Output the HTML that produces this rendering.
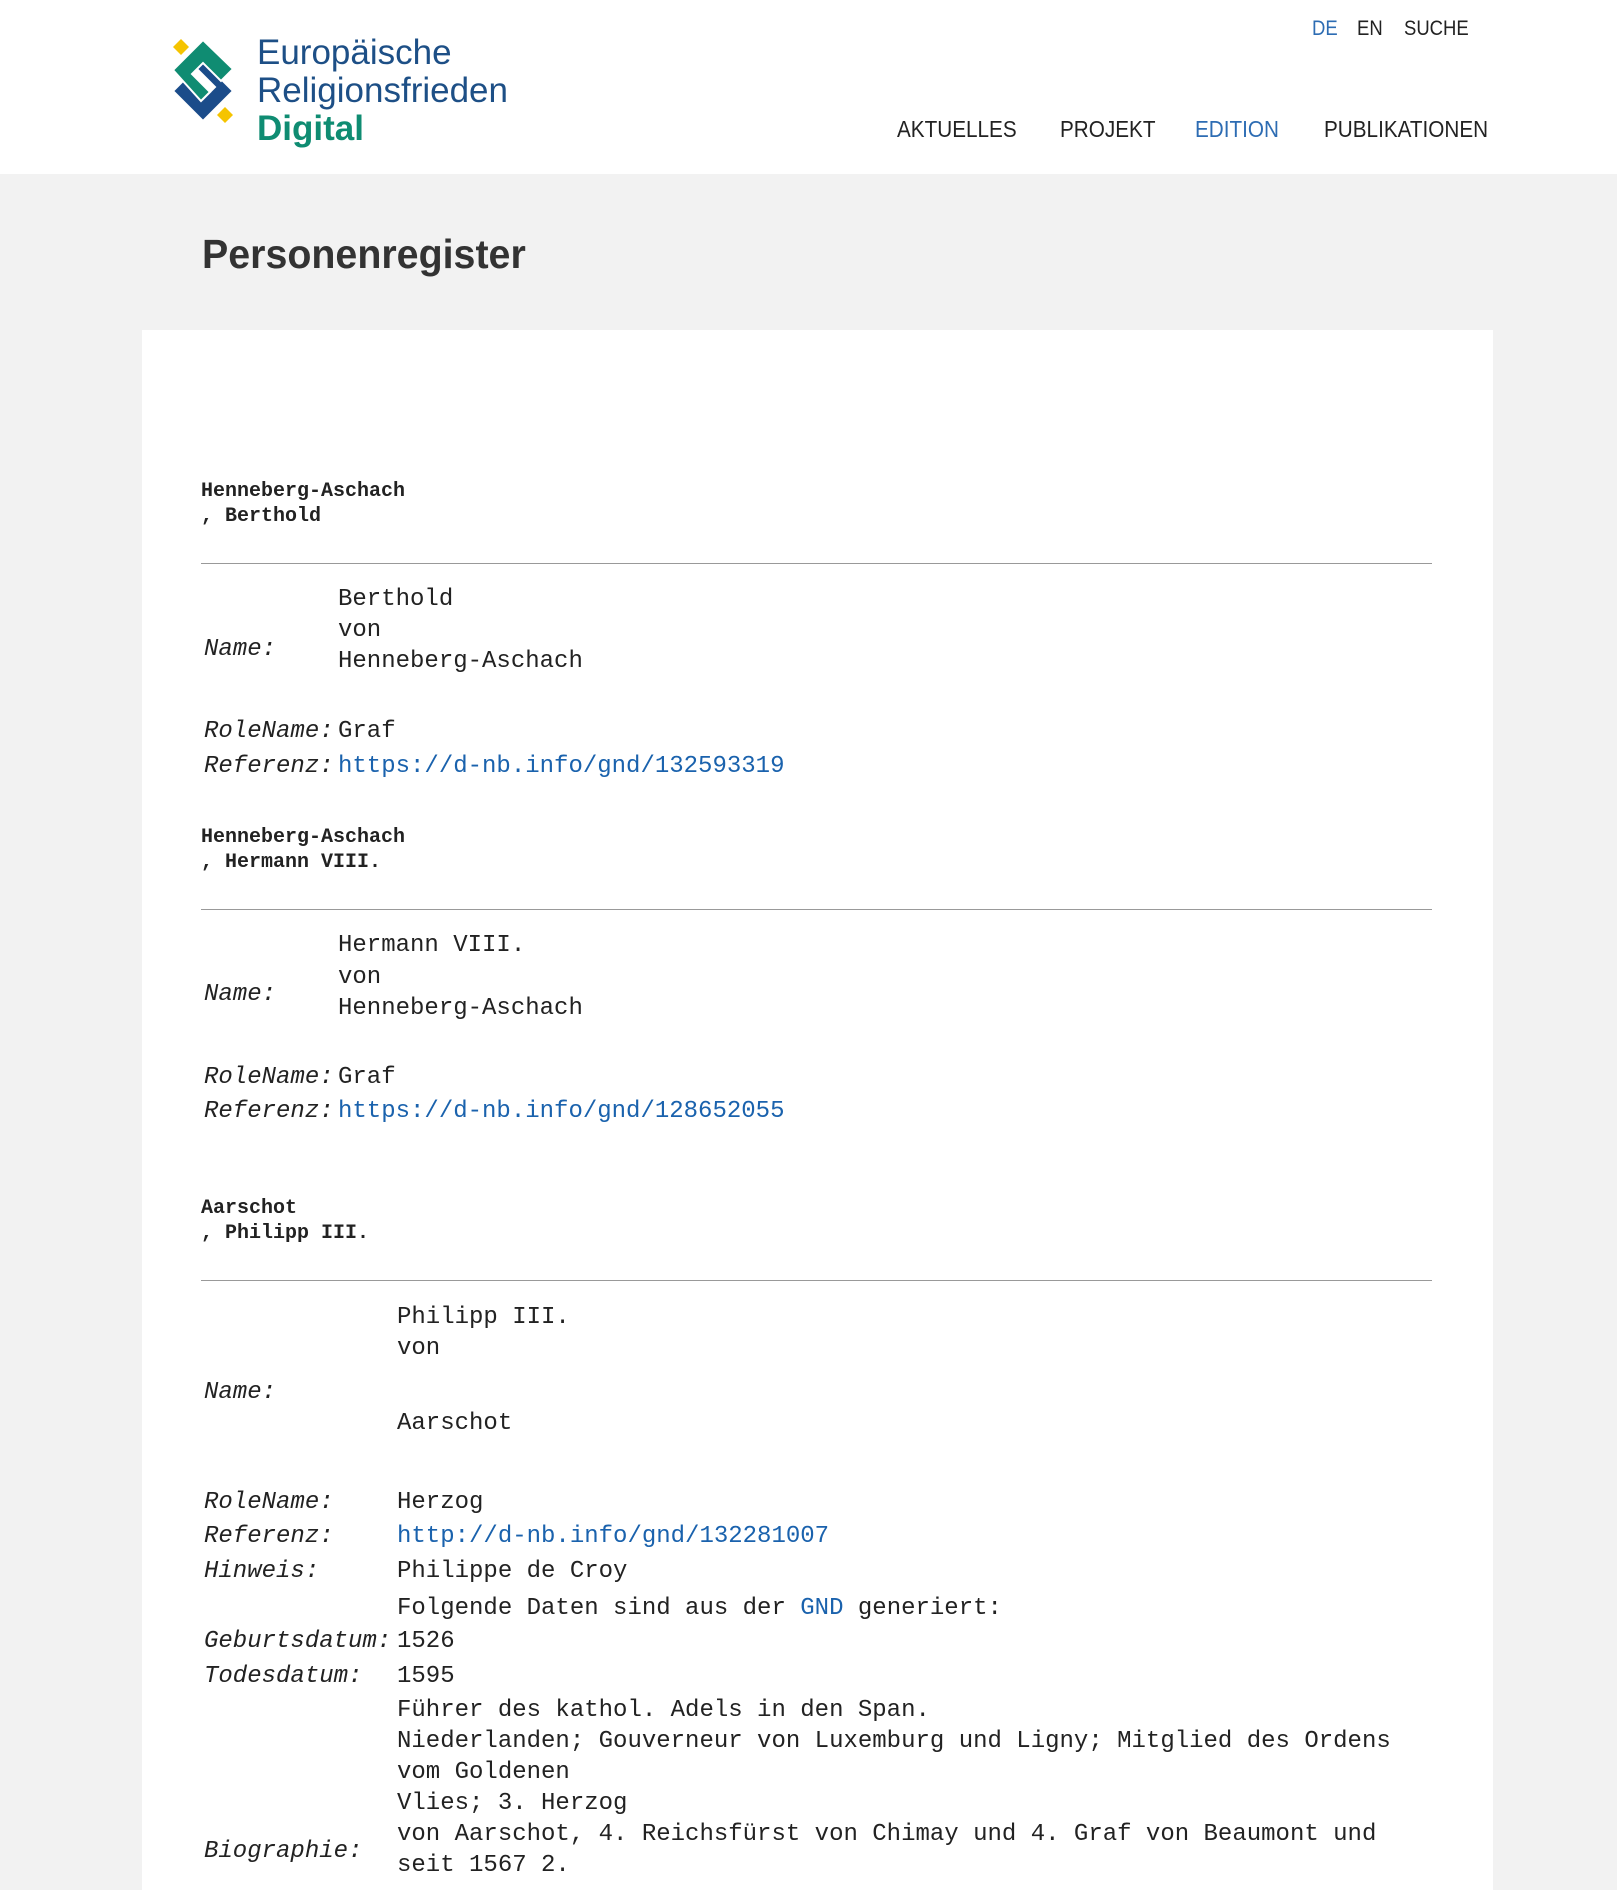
<!DOCTYPE html>
<html><head><meta charset="utf-8"><style>
body{margin:0;width:1617px;height:1868px;overflow:hidden;background:#f2f2f2;font-family:"Liberation Sans",sans-serif;position:relative}
.hdr{position:absolute;left:0;top:0;width:1617px;height:174px;background:#fff}
.a{position:absolute;white-space:nowrap}
.nav{font-size:23px;color:#222;transform:scaleX(.9);transform-origin:left center;line-height:30px}
.sn{font-size:21px;transform:scaleX(.88)}
.logo{font-size:35px;color:#1d4f86;transform:scaleX(1);transform-origin:left center;line-height:38px}
.card{position:absolute;left:142px;top:330px;width:1351px;height:1560px;background:#fff}
.m{font-family:"Liberation Mono",monospace;font-size:24px;color:#222;line-height:31px;position:absolute;white-space:nowrap}
.h{font-family:"Liberation Mono",monospace;font-size:20px;font-weight:bold;color:#222;line-height:25px;position:absolute;white-space:nowrap}
.i{font-style:italic}
.l{color:#1a62ad}
hr{position:absolute;left:201px;width:1231px;margin:0;border:0;border-top:1px solid #999}
</style></head><body>
<div class="hdr"></div>
<svg class="a" style="left:160px;top:30px" width="90" height="100" viewBox="160 30 90 100">
<polygon points="181,39 189,47 181,55 173,47" fill="#f5c400"/>
<polygon points="225,107 233,115 225,123 217,115" fill="#f5c400"/>
<polygon points="203,61 233,91 203,121 173,91 184,80 203,99 215,87 196,68" fill="#1b4c8a" stroke="#fff" stroke-width="2"/>
<polygon points="203,40 233,69 221,81 203,63 192,74 210,92 201,101 173,70" fill="#0f8c72" stroke="#fff" stroke-width="2"/>
</svg>
<div class="a logo" style="left:257px;top:34px">Europäische</div>
<div class="a logo" style="left:257px;top:72px">Religionsfrieden</div>
<div class="a logo" style="left:257px;top:110px;color:#0f8c72;font-weight:bold">Digital</div>
<div class="a nav sn" style="left:1312px;top:14px;color:#2d6cb3">DE</div>
<div class="a nav sn" style="left:1357px;top:14px">EN</div>
<div class="a nav sn" style="left:1404px;top:14px">SUCHE</div>
<div class="a nav" style="left:897px;top:114px">AKTUELLES</div>
<div class="a nav" style="left:1060px;top:114px">PROJEKT</div>
<div class="a nav" style="left:1195px;top:114px;color:#2d6cb3">EDITION</div>
<div class="a nav" style="left:1324px;top:114px">PUBLIKATIONEN</div>
<div class="a" style="left:202px;top:231px;font-size:41px;font-weight:bold;color:#333;transform:scaleX(.96);transform-origin:left center">Personenregister</div>
<div class="card"></div>

<div class="h" style="left:201px;top:479px">Henneberg-Aschach</div>
<div class="h" style="left:201px;top:504px">, Berthold</div>
<hr style="top:563px">
<div class="m" style="left:338px;top:584px">Berthold</div>
<div class="m" style="left:338px;top:615px">von</div>
<div class="m" style="left:338px;top:646px">Henneberg-Aschach</div>
<div class="m i" style="left:204px;top:634px">Name:</div>
<div class="m i" style="left:204px;top:716px">RoleName:</div><div class="m" style="left:338px;top:716px">Graf</div>
<div class="m i" style="left:204px;top:751px">Referenz:</div><div class="m l" style="left:338px;top:751px">https://d-nb.info/gnd/132593319</div>

<div class="h" style="left:201px;top:825px">Henneberg-Aschach</div>
<div class="h" style="left:201px;top:850px">, Hermann VIII.</div>
<hr style="top:909px">
<div class="m" style="left:338px;top:930px">Hermann VIII.</div>
<div class="m" style="left:338px;top:962px">von</div>
<div class="m" style="left:338px;top:993px">Henneberg-Aschach</div>
<div class="m i" style="left:204px;top:979px">Name:</div>
<div class="m i" style="left:204px;top:1062px">RoleName:</div><div class="m" style="left:338px;top:1062px">Graf</div>
<div class="m i" style="left:204px;top:1096px">Referenz:</div><div class="m l" style="left:338px;top:1096px">https://d-nb.info/gnd/128652055</div>

<div class="h" style="left:201px;top:1196px">Aarschot</div>
<div class="h" style="left:201px;top:1221px">, Philipp III.</div>
<hr style="top:1280px">
<div class="m" style="left:397px;top:1302px">Philipp III.</div>
<div class="m" style="left:397px;top:1333px">von</div>
<div class="m" style="left:397px;top:1408px">Aarschot</div>
<div class="m i" style="left:204px;top:1377px">Name:</div>
<div class="m i" style="left:204px;top:1487px">RoleName:</div><div class="m" style="left:397px;top:1487px">Herzog</div>
<div class="m i" style="left:204px;top:1521px">Referenz:</div><div class="m l" style="left:397px;top:1521px">http://d-nb.info/gnd/132281007</div>
<div class="m i" style="left:204px;top:1556px">Hinweis:</div><div class="m" style="left:397px;top:1556px">Philippe de Croy</div>
<div class="m" style="left:397px;top:1593px">Folgende Daten sind aus der <span class="l">GND</span> generiert:</div>
<div class="m i" style="left:204px;top:1626px">Geburtsdatum:</div><div class="m" style="left:397px;top:1626px">1526</div>
<div class="m i" style="left:204px;top:1661px">Todesdatum:</div><div class="m" style="left:397px;top:1661px">1595</div>
<div class="m" style="left:397px;top:1695px">Führer des kathol. Adels in den Span.</div>
<div class="m" style="left:397px;top:1726px">Niederlanden; Gouverneur von Luxemburg und Ligny; Mitglied des Ordens</div>
<div class="m" style="left:397px;top:1757px">vom Goldenen</div>
<div class="m" style="left:397px;top:1788px">Vlies; 3. Herzog</div>
<div class="m" style="left:397px;top:1819px">von Aarschot, 4. Reichsfürst von Chimay und 4. Graf von Beaumont und</div>
<div class="m i" style="left:204px;top:1836px">Biographie:</div>
<div class="m" style="left:397px;top:1850px">seit 1567 2.</div>
</body></html>
